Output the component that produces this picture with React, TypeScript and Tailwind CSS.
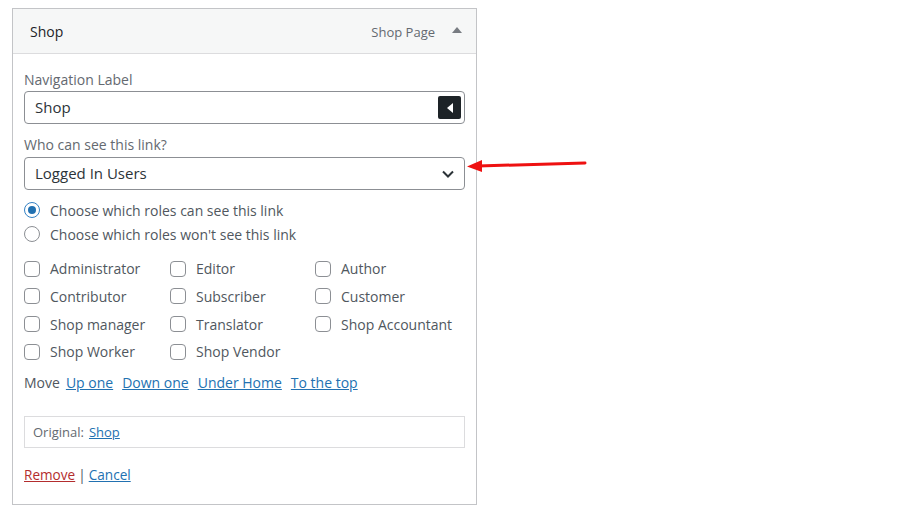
import React from 'react';

const roles = [
  ['Administrator', 'Editor', 'Author'],
  ['Contributor', 'Subscriber', 'Customer'],
  ['Shop manager', 'Translator', 'Shop Accountant'],
  ['Shop Worker', 'Shop Vendor', ''],
];

function Checkbox({ label }: { label: string }) {
  if (!label) return <div />;
  return (
    <label className="flex items-center gap-[10px]">
      <span className="w-4 h-4 rounded-[4px] border border-[#8c8f94] bg-white shrink-0" />
      <span>{label}</span>
    </label>
  );
}

function Radio({ checked, label }: { checked?: boolean; label: string }) {
  return (
    <label className="flex items-center gap-[10px] h-6">
      <span
        className={
          checked
            ? 'w-4 h-4 rounded-full border border-[#3582c4] bg-white flex items-center justify-center shrink-0'
            : 'w-4 h-4 rounded-full border border-[#8c8f94] bg-white shrink-0'
        }
      >
        {checked && <span className="w-2 h-2 rounded-full bg-[#2271b1]" />}
      </span>
      <span>{label}</span>
    </label>
  );
}

export default function App() {
  return (
    <div className="relative w-[909px] h-[507px] bg-white text-[14px] text-[#50575e]" style={{ fontFamily: '"Open Sans", "Noto Sans", sans-serif' }}>
      <div className="ml-[12px] pt-[8px]">
        <div className="w-[465px] h-[497px] border border-[#c3c4c7] flex flex-col">
          <div className="h-[45px] bg-[#f6f7f7] border-b border-[#dcdcde] flex items-center pl-[17px] pr-[14px]">
            <span className="font-medium text-[#1d2327] mt-[1px]">Shop</span>
            <span className="ml-auto text-[13px] text-[#646970] mt-[3px]">Shop Page</span>
            <svg width="10" height="6" viewBox="0 0 10 6" className="ml-[17px] mb-[3px]">
              <polygon points="0,6 10,6 5,0" fill="#787c82" />
            </svg>
          </div>

          <div className="px-[11px] pt-[16px] flex flex-col">
            <div className="text-[#646970] leading-[20px]">Navigation Label</div>
            <div className="mt-[1px] h-[33px] border border-[#8c8f94] rounded-[4px] flex items-center pl-[10px] pr-[3px] text-[#2c3338] text-[15px]">
              <span>Shop</span>
              <span className="ml-auto w-[23px] h-[23px] bg-[#1d2327] rounded-[2px] flex items-center justify-center">
                <svg width="8" height="10" viewBox="0 0 8 10">
                  <polygon points="7,0 7,10 1,5" fill="#fff" />
                </svg>
              </span>
            </div>

            <div className="mt-[11px] text-[#646970] leading-[20px]">Who can see this link?</div>
            <div className="mt-[2px] h-[33px] border border-[#8c8f94] rounded-[4px] flex items-center pl-[10px] pr-[10px] text-[#2c3338] text-[15px]">
              <span>Logged In Users</span>
              <svg width="12" height="8" viewBox="0 0 12 8" className="ml-auto">
                <polyline points="1,1.5 6,6.5 11,1.5" fill="none" stroke="#2c3338" strokeWidth="2" />
              </svg>
            </div>

            <div className="mt-[8px] flex flex-col">
              <Radio checked label="Choose which roles can see this link" />
              <Radio label="Choose which roles won't see this link" />
            </div>

            <div className="mt-[12px] flex flex-col gap-[6.8px]">
              {roles.map((row, i) => (
                <div key={i} className="grid grid-cols-[146px_145px_1fr] h-[21px]">
                  {row.map((r, j) => (
                    <Checkbox key={j} label={r} />
                  ))}
                </div>
              ))}
            </div>

            <div className="mt-[8px] flex items-center h-[24px]">
              <span className="mr-[6px]">Move</span>
              <div className="flex items-center gap-[9px]">
                <a className="text-[#2271b1] underline">Up one</a>
                <a className="text-[#2271b1] underline">Down one</a>
                <a className="text-[#2271b1] underline">Under Home</a>
                <a className="text-[#2271b1] underline">To the top</a>
              </div>
            </div>

            <div className="mt-[22px] h-[32px] border border-[#dcdcde] flex items-center pl-[8px] text-[13px] text-[#646970] gap-[5px]">
              <span>Original:</span>
              <a className="text-[#2271b1] underline">Shop</a>
            </div>

            <div className="mt-[17px] flex items-center gap-[3px] text-[13.6px]">
              <a className="text-[#b32d2e] underline">Remove</a>
              <span>|</span>
              <a className="text-[#2271b1] underline">Cancel</a>
            </div>
          </div>
        </div>
      </div>

      <svg className="absolute left-[464px] top-[154px]" width="126" height="22" viewBox="0 0 126 22">
        <line x1="14" y1="12" x2="121" y2="9" stroke="#ee1111" strokeWidth="3" strokeLinecap="round" />
        <polygon points="3,12.5 18,6 18,18" fill="#ee1111" />
      </svg>
    </div>
  );
}
